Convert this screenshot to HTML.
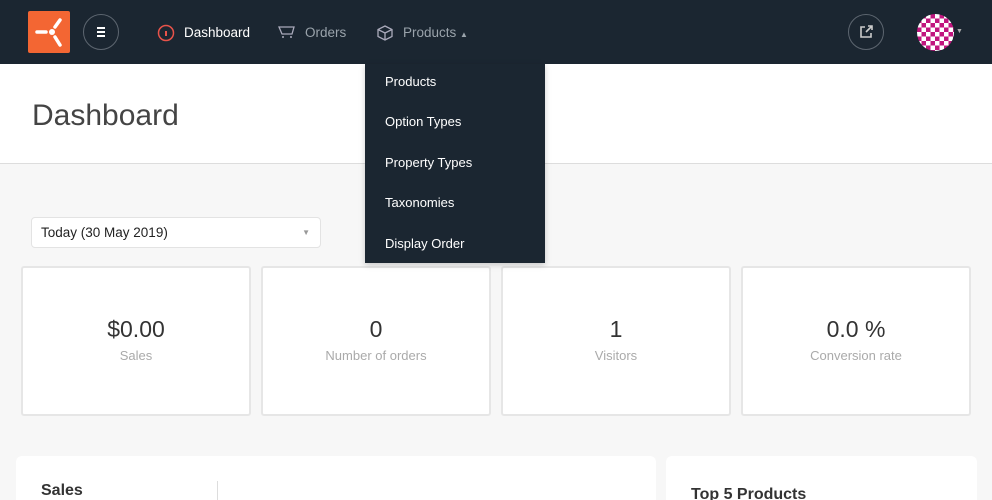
<!DOCTYPE html>
<html><head><style>
*{box-sizing:border-box;margin:0;padding:0}
html,body{width:992px;height:500px;overflow:hidden}
body{background:#f7f7f7;font-family:"Liberation Sans",sans-serif;position:relative}
.nav{position:absolute;left:0;top:0;width:992px;height:64px;background:#1b2631}
.logo{position:absolute;left:28px;top:11px;width:42px;height:42px;background:#f36633;border-radius:2px}
.circ{position:absolute;width:36px;height:36px;border:1px solid #5d6670;border-radius:50%}
.ni{position:absolute;top:25px;font-size:13.5px;color:#9aa3ab}
.hdr{position:absolute;left:0;top:64px;width:992px;height:100px;background:#fff;border-bottom:1px solid #ddd}
.hdr h1{position:absolute;left:32px;top:35px;font-weight:normal;font-size:30px;color:#444}
.sel{position:absolute;left:31px;top:217px;width:290px;height:31px;background:#fff;border:1px solid #e3e3e3;border-radius:4px;font-size:13.5px;color:#222;padding:7px 9px}
.card{position:absolute;top:266px;width:230px;height:150px;background:#fff;border:2px solid #e6e6e6;border-radius:3px;text-align:center}
.card .v{margin-top:48px;font-size:23px;color:#333}
.card .l{margin-top:5px;font-size:13px;color:#aaa}
.pan{position:absolute;top:456px;height:60px;background:#fff;border-radius:6px}
.menu{position:absolute;left:365px;top:64px;width:180px;height:199px;background:#1b2631;box-shadow:0 2px 6px rgba(0,0,0,.2)}
.menu div{position:absolute;left:20px;font-size:13px;color:#fff}
</style></head><body>
<div class="nav">
 <div class="logo"><svg width="42" height="42" viewBox="0 0 42 42"><circle cx="24" cy="21" r="3" fill="#fff"/><path d="M9 21h9" stroke="#fff" stroke-width="3.5" stroke-linecap="round"/><path d="M27 16l5-7M27 26l5 8" stroke="#fff" stroke-width="3.5" stroke-linecap="round"/></svg></div>
 <div class="circ" style="left:83px;top:14px"><svg width="34" height="34" viewBox="0 0 34 34"><path d="M13 13h8M13 17h8M13 21h8" stroke="#fff" stroke-width="2"/></svg></div>
 <svg style="position:absolute;left:157px;top:24px" width="18" height="18" viewBox="0 0 18 18"><circle cx="9" cy="9" r="7.5" fill="none" stroke="#e8534a" stroke-width="1.5"/><path d="M9 7v5" stroke="#e8534a" stroke-width="2"/></svg>
 <div class="ni" style="left:184px;color:#fff">Dashboard</div>
 <svg style="position:absolute;left:278px;top:25px" width="18" height="14" viewBox="0 0 18 14"><path d="M1 2h15l-2 7H4z" fill="none" stroke="#aab" stroke-width="1.3"/><circle cx="5" cy="12" r="1" fill="#aab"/><circle cx="13" cy="12" r="1" fill="#aab"/></svg>
 <div class="ni" style="left:305px">Orders</div>
 <svg style="position:absolute;left:376px;top:24px" width="18" height="18" viewBox="0 0 18 18"><path d="M9 2l7 3.5v7L9 16l-7-3.5v-7zM2 5.5L9 9l7-3.5M9 9v7" fill="none" stroke="#aab" stroke-width="1.3"/></svg>
 <div class="ni" style="left:403px">Products <span style="font-size:8px">▲</span></div>
 <div class="circ" style="left:848px;top:14px"><svg width="34" height="34" viewBox="0 0 34 34"><path d="M16 12h-4v10h10v-4M17 17l6-6M19 11h4v4" fill="none" stroke="#ccc" stroke-width="1.6"/></svg></div>
 <div style="position:absolute;left:917px;top:14px;width:37px;height:37px;border-radius:50%;background:repeating-conic-gradient(#c0157e 0 25%,#fff 0 50%) 0 0/9px 9px"></div>
 <div style="position:absolute;left:956px;top:28px;font-size:7px;color:#aaa">▼</div>
</div>
<div class="hdr"><h1>Dashboard</h1></div>
<div class="sel">Today (30 May 2019)<span style="position:absolute;right:10px;top:10px;font-size:8px;color:#999">▼</span></div>
<div class="card" style="left:21px"><div class="v">$0.00</div><div class="l">Sales</div></div>
<div class="card" style="left:261px"><div class="v">0</div><div class="l">Number of orders</div></div>
<div class="card" style="left:501px"><div class="v">1</div><div class="l">Visitors</div></div>
<div class="card" style="left:741px"><div class="v">0.0 %</div><div class="l">Conversion rate</div></div>
<div class="pan" style="left:16px;width:640px"><div style="position:absolute;left:25px;top:26px;font-size:16px;font-weight:bold;color:#333">Sales</div><div style="position:absolute;left:201px;top:25px;width:1px;height:40px;background:#ddd"></div></div>
<div class="pan" style="left:666px;width:311px"><div style="position:absolute;left:25px;top:30px;font-size:16px;font-weight:bold;color:#333">Top 5 Products</div></div>
<div class="menu">
 <div style="top:10px">Products</div><div style="top:50px">Option Types</div><div style="top:91px">Property Types</div><div style="top:131px">Taxonomies</div><div style="top:172px">Display Order</div>
</div>
</body></html>
